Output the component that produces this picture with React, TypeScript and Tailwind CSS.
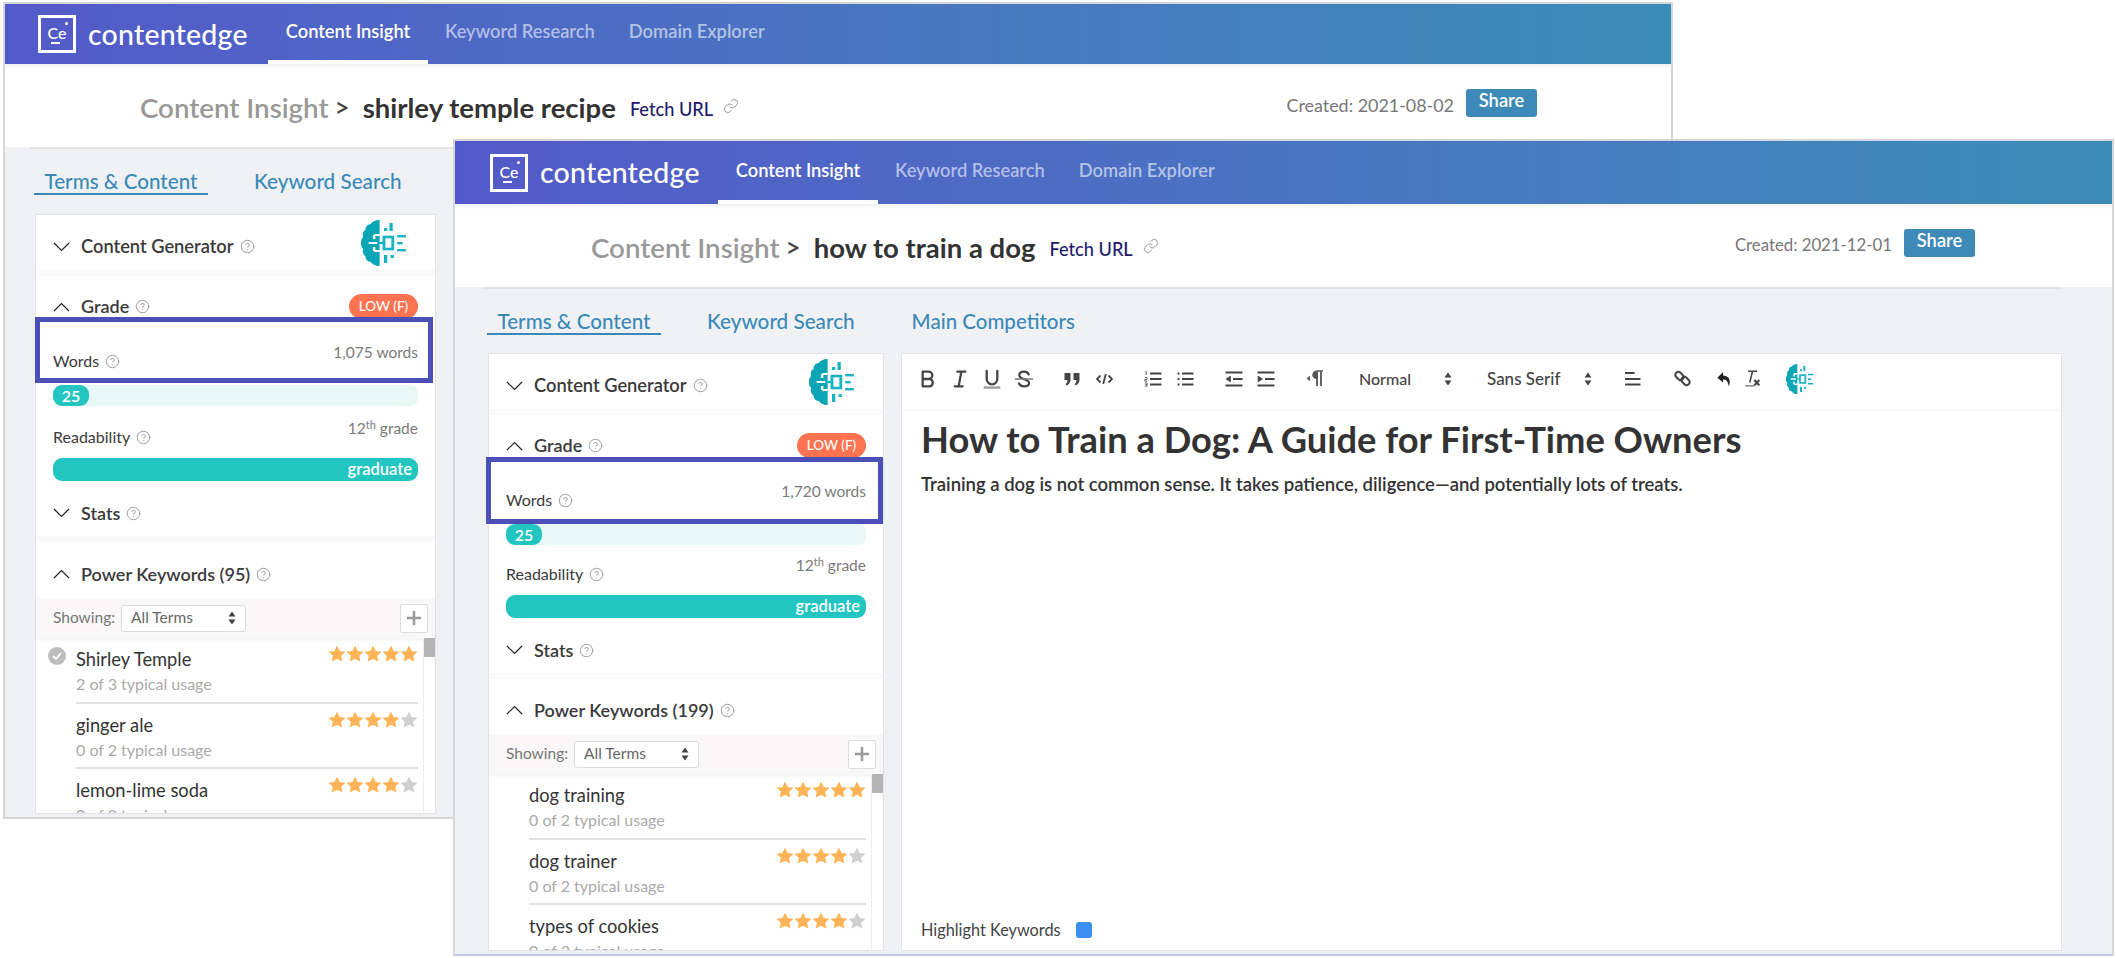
import { CircleHelp, Link as LinkIcon } from "lucide-react";

type Keyword = { name: string; usage: string; stars: number; checked?: boolean };

function Chevron({ up }: { up?: boolean }) {
	return (
		<svg width="17" height="10" viewBox="0 0 17 10" fill="none" stroke="#222" strokeWidth="1.2" className="shrink-0">
			<path d={up ? "M1 9L8.5 1.5L16 9" : "M1 1L8.5 8.5L16 1"} />
		</svg>
	);
}

function Help() {
	return <CircleHelp size={15} strokeWidth={1.5} className="ml-[6px] shrink-0 text-[#999]" />;
}

function Star({ on }: { on: boolean }) {
	return (
		<svg width="18" height="17" viewBox="0 0 18 17" className={on ? "fill-[#ffb457]" : "fill-[#cfcfcf]"}>
			<path d="M9 0.5L11.6 5.9L17.5 6.7L13.2 10.8L14.3 16.6L9 13.8L3.7 16.6L4.8 10.8L0.5 6.7L6.4 5.9Z" />
		</svg>
	);
}

function Brain({ className }: { className: string }) {
	return (
		<svg viewBox="0 0 42 46" preserveAspectRatio="none" className={className}>
			<path
				d="M17 0C13 0 10 2 9 4C6 4 4 7 4 10C2 11 1 14 2 17C0 19 0 21 0 23C0 25 0 27 2 29C1 32 2 35 4 36C4 39 6 42 9 42C10 44 13 46 17 46Z"
				fill="#0aa6b8"
			/>
			<path d="M7 23H15M12 15H17M12 31H17M12 15V19M12 27V31" fill="none" stroke="#fff" strokeWidth="2.2" />
			<path d="M15 23H21" fill="none" stroke="#18b4c4" strokeWidth="2.2" />
			<rect x="21" y="17" width="8" height="12" fill="none" stroke="#18b4c4" strokeWidth="2.6" />
			<rect x="21" y="8" width="3" height="3" fill="#18b4c4" />
			<rect x="26" y="3" width="3" height="8" fill="#18b4c4" />
			<rect x="33" y="15" width="8" height="2.4" fill="#18b4c4" />
			<rect x="33" y="22" width="5" height="2.4" fill="#18b4c4" />
			<rect x="33" y="29" width="8" height="2.4" fill="#18b4c4" />
			<rect x="21" y="35" width="3" height="8" fill="#18b4c4" />
			<rect x="27" y="35" width="3" height="3" fill="#18b4c4" />
		</svg>
	);
}

function QlIcon({ children }: { children: React.ReactNode }) {
	return (
		<svg width="24" height="24" viewBox="0 0 18 18" fill="none" stroke="#444" strokeWidth="1.7" strokeLinecap="round" strokeLinejoin="round">
			{children}
		</svg>
	);
}

function Btn({ children, className = "w-[32px]" }: { children: React.ReactNode; className?: string }) {
	return <div className={`flex shrink-0 items-center justify-center ${className}`}>{children}</div>;
}

function Arrows() {
	return (
		<svg width="8" height="14" viewBox="0 0 8 14" className="fill-[#444]">
			<path d="M4 0.5L7.5 5.5H0.5ZM4 13.5L0.5 8.5H7.5Z" />
		</svg>
	);
}

function Toolbar() {
	return (
		<div className="flex h-[55px] shrink-0 items-center pb-[6px] pl-[10px] shadow-[0_2px_3px_rgba(0,0,0,0.04)]">
			<Btn><QlIcon><path d="M5 3.500H9.500A2.700 2.700 0 0 1 9.500 9H5ZM5 9H10.300A2.800 2.800 0 0 1 10.300 14.500H5Z" /></QlIcon></Btn>
			<Btn><QlIcon><path d="M7 3.500H13M5 14.500H11M10 3.500L8 14.500" /></QlIcon></Btn>
			<Btn><QlIcon><path d="M5 3V9A4 4 0 0 0 13 9V3" /><path d="M3.500 15.500H14.500" stroke="#999" /></QlIcon></Btn>
			<Btn><QlIcon><path d="M12.500 5.500C12 4 10.700 3.500 9 3.500C7 3.500 5.500 4.500 5.500 6.200C5.500 9.500 12.800 8.800 12.800 12C12.800 13.700 11 14.500 9 14.500C7 14.500 5.700 13.800 5.200 12.300" /><path d="M2.500 9H15.500" stroke="#777" strokeWidth="1.200" /></QlIcon></Btn>
			<Btn className="ml-[16px] w-[32px]">
				<svg width="16" height="14" viewBox="0 0 16 14" className="fill-[#444]"><path d="M0.500 1H6.500V7.500C6.500 10.500 5 12.500 2.500 13.500L1.500 12C3 11 3.500 10 3.500 8H0.500ZM9.500 1H15.500V7.500C15.500 10.500 14 12.500 11.500 13.500L10.500 12C12 11 12.500 10 12.500 8H9.500Z" /></svg>
			</Btn>
			<Btn>
				<svg width="17" height="14" viewBox="0 0 17 14" fill="none" stroke="#444" strokeWidth="1.800"><path d="M4.500 3.500L1 7L4.500 10.500M12.500 3.500L16 7L12.500 10.500M9.800 2L7.200 12" /></svg>
			</Btn>
			<Btn className="ml-[17px] w-[32px]">
				<svg width="18" height="16" viewBox="0 0 18 16" fill="none" stroke="#444" strokeWidth="2"><path d="M6 2.500H17.500M6 8H17.500M6 13.500H17.500" /><path d="M1 1L2.300 0.600V4M0.800 6.500H3V8.500H0.800V10.200H3M0.800 12H3V15.200H0.800M1.200 13.600H3" strokeWidth="0.800" /></svg>
			</Btn>
			<Btn>
				<svg width="17" height="16" viewBox="0 0 17 16" fill="none" stroke="#444" strokeWidth="2"><path d="M5 2.500H16.500M5 8H16.500M5 13.500H16.500M0.500 2.500H2.500M0.500 8H2.500M0.500 13.500H2.500" /></svg>
			</Btn>
			<Btn className="ml-[17px] w-[32px]">
				<svg width="18" height="16" viewBox="0 0 18 16" fill="none" stroke="#444" strokeWidth="2"><path d="M0.500 1.500H17.500M0.500 14.500H17.500M8 8H17.500" /><path d="M1 8L5.500 5V11Z" fill="#444" strokeWidth="0.600" /></svg>
			</Btn>
			<Btn>
				<svg width="18" height="16" viewBox="0 0 18 16" fill="none" stroke="#444" strokeWidth="2"><path d="M0.500 1.500H17.500M0.500 14.500H17.500M8 8H17.500" /><path d="M1 5L5.500 8L1 11Z" fill="#444" strokeWidth="0.600" /></svg>
			</Btn>
			<Btn className="ml-[17px] w-[32px]">
				<svg width="18" height="17" viewBox="0 0 18 17" fill="none" stroke="#555" strokeWidth="1.800"><path d="M0.800 8.500L3.800 6V11Z" fill="#555" strokeWidth="0.400" /><path d="M11 1.500V16M15 1.500V16" /><path d="M17 1H10.500C8 1 6.800 3 6.800 5C6.800 7 8 8.500 11 8.500V1Z" fill="#555" strokeWidth="1" /></svg>
			</Btn>
			<div className="ml-[28px] flex w-[96px] shrink-0 items-center justify-between pr-[3px] text-[16px] font-medium text-[#444]">
				<span>Normal</span>
				<Arrows />
			</div>
			<div className="ml-[32px] flex w-[108px] shrink-0 items-center justify-between pr-[3px] text-[17px] font-medium text-[#444]">
				<span>Sans Serif</span>
				<Arrows />
			</div>
			<Btn className="ml-[21px] w-[32px]">
				<svg width="17" height="15" viewBox="0 0 17 15" fill="none" stroke="#444" strokeWidth="2.200"><path d="M1 2H10.500M1 8H16.500M1 13.500H16.500" /></svg>
			</Btn>
			<Btn className="ml-[20px] w-[28px]">
				<svg width="17" height="17" viewBox="0 0 17 17" fill="none" stroke="#444" strokeWidth="2">
					<rect x="1" y="3" width="9" height="6" rx="3" transform="rotate(45 5.500 6)" />
					<rect x="7" y="8" width="9" height="6" rx="3" transform="rotate(45 11.500 11)" />
				</svg>
			</Btn>
			<Btn className="ml-[14px] w-[28px]">
				<svg width="16" height="16" viewBox="0 0 16 18" className="fill-[#222]"><path d="M7 1L0.500 7.500L7 13V9.500C10.500 9.500 12.500 11.500 13.500 17.500C15.500 12 15 5.500 7 5Z" /></svg>
			</Btn>
			<Btn className="w-[28px]">
				<svg width="17" height="20" viewBox="0 0 18 22" fill="none" stroke="#444" strokeWidth="1.700"><path d="M4 2.500H14M9 2.500L6 15" /><path d="M1 18.500H11" stroke="#888" /><path d="M11 12L16.500 18M16.500 12L11 18" strokeWidth="2.400" /></svg>
			</Btn>
			<Brain className="ml-[20px] h-[30px] w-[28px] shrink-0" />
		</div>
	);
}

function Row({ label, value }: { label: string; value: React.ReactNode }) {
	return (
		<div className="mx-[17px] flex h-[29px] items-start justify-between">
			<div className="mt-[9px] flex items-center text-[16px] leading-[20px] text-[#3a3a3a]">
				{label}
				<Help />
			</div>
			<div className="text-[15.5px] leading-[20px] text-[#7a7a7a]">{value}</div>
		</div>
	);
}

function KeywordRow({ k }: { k: Keyword }) {
	return (
		<div className="relative ml-[40px] mr-[17px] h-[65.5px] border-b-2 border-[#e2e2e2] pt-[9px] last:border-0">
			{k.checked && (
				<div className="absolute -left-[28px] top-[9px] flex h-[18px] w-[18px] items-center justify-center rounded-full bg-[#bdbdbd]">
					<svg width="10" height="8" viewBox="0 0 10 8" fill="none" stroke="#fff" strokeWidth="1.800"><path d="M1 4L4 7L9 1" /></svg>
				</div>
			)}
			<div className="flex items-start justify-between">
				<span className="text-[18.3px] leading-[24px] text-[#333]">{k.name}</span>
				<div className="-mt-[2px] flex">
					{[0, 1, 2, 3, 4].map((n) => (
						<Star key={n} on={n < k.stars} />
					))}
				</div>
			</div>
			<div className="mt-[2px] text-[16px] leading-[22px] text-[#aaa]">{k.usage}</div>
		</div>
	);
}

function Sidebar({
	words,
	keywordsCount,
	keywords,
	boxClass,
	widthClass,
	readClass,
	powerClass,
}: {
	words: string;
	keywordsCount: number;
	keywords: Keyword[];
	boxClass: string;
	widthClass: string;
	readClass: string;
	powerClass: string;
}) {
	return (
		<div className={`relative flex h-full shrink-0 flex-col border border-[#e2e3e6] bg-white ${widthClass}`}>
			<div className="relative flex h-[55px] shrink-0 items-center pl-[17px] pt-[8px]">
				<Chevron />
				<span className="ml-[11px] text-[18.3px] font-semibold text-[#3a3a3a]">Content Generator</span>
				<Help />
				<Brain className="absolute right-[28px] top-[5px] h-[46px] w-[46px]" />
			</div>
			<div className="h-[6px] shrink-0 bg-[#fafafa]" />
			<div className="mt-[18px] flex h-[25px] shrink-0 items-center justify-between px-[17px]">
				<div className="flex items-center">
					<Chevron up />
					<span className="ml-[11px] text-[18px] font-semibold text-[#3a3a3a]">Grade</span>
					<Help />
				</div>
				<div className="flex h-[25px] w-[69px] items-center justify-center rounded-full bg-[#ff7350] text-[13.5px] font-medium text-white">LOW (F)</div>
			</div>
			<div className="mt-[23px] shrink-0">
				<Row label="Words" value={words} />
			</div>
			<div className="mx-[17px] mt-[14px] h-[21px] shrink-0 rounded-[8px] bg-[#e8f8f6]">
				<div className="flex h-full w-[36px] items-center justify-center rounded-[9px] bg-[#22c5c0] text-[16px] font-semibold text-white">25</div>
			</div>
			<div className={`shrink-0 ${readClass}`}>
				<Row label="Readability" value={<>12<sup className="text-[11px]">th</sup> grade</>} />
			</div>
			<div className="mx-[17px] mt-[11px] flex h-[23px] shrink-0 items-center justify-end rounded-[9px] bg-[#22c5c0] pr-[6px] text-[16.5px] font-semibold text-white">graduate</div>
			<div className="mt-[20px] flex h-[24px] shrink-0 items-center pl-[17px]">
				<Chevron />
				<span className="ml-[11px] text-[18px] font-semibold text-[#3a3a3a]">Stats</span>
				<Help />
			</div>
			<div className="mt-[11px] h-[6px] shrink-0 bg-[#fafafa]" />
			<div className={`flex h-[24px] shrink-0 items-center pl-[17px] ${powerClass}`}>
				<Chevron up />
				<span className="ml-[11px] text-[18px] font-semibold text-[#3a3a3a]">Power Keywords ({keywordsCount})</span>
				<Help />
			</div>
			<div className="mt-[12px] flex h-[40px] shrink-0 items-center bg-[#f9f7f8] pl-[17px] shadow-[0_2px_3px_rgba(0,0,0,0.05)]">
				<span className="text-[15.5px] text-[#777]">Showing:</span>
				<div className="ml-[6px] flex h-[27px] w-[125px] items-center justify-between rounded-[3px] border border-[#dcdcdc] bg-white px-[9px] text-[15.5px] text-[#666]">
					All Terms
					<Arrows />
				</div>
				<div className="ml-auto mr-[7px] flex h-[29px] w-[28px] items-center justify-center rounded-[2px] border border-[#ddd] bg-white">
					<svg width="14" height="14" viewBox="0 0 14 14" fill="none" stroke="#999" strokeWidth="2.500"><path d="M7 0V14M0 7H14" /></svg>
				</div>
			</div>
			<div className="relative min-h-0 flex-1 overflow-hidden">
				{keywords.map((k) => (
					<KeywordRow key={k.name} k={k} />
				))}
				<div className="absolute bottom-0 right-0 top-0 w-[12px] border-l border-[#eee] bg-white">
					<div className="h-[19px] bg-[#b5b5b5]" />
				</div>
			</div>
			<div className={`pointer-events-none absolute border-[5.5px] border-[#4b4fb8] ${boxClass}`} />
		</div>
	);
}

function Editor() {
	return (
		<div className="flex min-w-0 flex-1 flex-col border border-[#e2e3e6] bg-white">
			<Toolbar />
			<h1 className="ml-[19px] mt-[8px] text-[36.3px] font-bold leading-[44px] text-[#333]">How to Train a Dog: A Guide for First-Time Owners</h1>
			<p className="ml-[19px] mt-[11px] text-[18.5px] font-semibold leading-[24px] text-[#333]">Training a dog is not common sense. It takes patience, diligence—and potentially lots of treats.</p>
			<div className="ml-[19px] mt-auto mb-[8px] flex items-center text-[16.3px] text-[#444]">
				Highlight Keywords
				<span className="ml-[15px] h-[16px] w-[16px] rounded-[3px] bg-[#3b8ff0]" />
			</div>
		</div>
	);
}

function Win({
	className,
	headerClass,
	logoClass,
	titleClass,
	createdClass,
	lineClass,
	tabsClass,
	mainClass,
	title,
	created,
	front,
	children,
}: {
	className: string;
	headerClass: string;
	logoClass: string;
	titleClass: string;
	createdClass: string;
	lineClass: string;
	tabsClass: string;
	mainClass: string;
	title: string;
	created: string;
	front?: boolean;
	children: React.ReactNode;
}) {
	return (
		<div className={`absolute flex flex-col overflow-hidden border-2 bg-white ${className}`}>
			<div className={`relative flex shrink-0 items-stretch bg-gradient-to-r from-[#5359c9] to-[#3c8cb8] ${headerClass}`}>
				<div className={`flex items-center ${logoClass}`}>
					<div className="relative flex h-[38px] w-[38px] shrink-0 items-center justify-center border-[3px] border-white text-[16px] font-medium text-white">
						<span className="-mt-[2px]">Ce</span>
						<span className="absolute right-[5px] top-[4px] h-[3px] w-[3px] rounded-full bg-white" />
						<span className="absolute bottom-[6px] left-[10px] h-[2px] w-[9px] bg-white" />
					</div>
					<span className="ml-[12px] text-[28.5px] font-medium leading-none tracking-[0.2px] text-white">contentedge</span>
				</div>
				<div className="flex w-[160px] items-center justify-center border-b-4 border-white text-[18.3px] font-semibold text-white">Content Insight</div>
				<div className="flex items-center px-[17px] pb-[4px] text-[18.3px] font-semibold text-[#b3bee8]">Keyword Research</div>
				<div className="flex items-center px-[17px] pb-[4px] text-[18.3px] font-semibold text-[#b3c3e6]">Domain Explorer</div>
			</div>
			<div className={`flex h-[83px] shrink-0 items-center shadow-[inset_0_6px_6px_-6px_rgba(0,0,0,0.12)] ${titleClass}`}>
				<div className="mt-[5px] flex items-center">
					<span className="text-[27.7px] font-semibold text-[#999]">Content Insight</span>
					<span className="ml-[6px] text-[26px] font-medium text-[#444]">&gt;</span>
					<span className="ml-[13px] text-[27.5px] font-bold text-[#333]">{title}</span>
					<span className="ml-[14px] mt-[3px] text-[18.2px] font-medium text-[#1e1b6e]">Fetch URL</span>
					<LinkIcon size={16} strokeWidth={1} className="ml-[10px] -mt-[4px] text-[#666]" />
				</div>
				<span className={`ml-auto -mt-[1px] text-[#777] ${createdClass}`}>Created: {created}</span>
				<div className="ml-[12px] -mt-[5px] flex h-[28px] w-[71px] items-center justify-center rounded-[3px] bg-[#3d8ab8] pb-[4px] text-[18.3px] font-semibold text-white">Share</div>
			</div>
			<div className="flex min-h-0 flex-1 flex-col bg-[#f0f1f5] pb-[3px]">
				<div className={`h-[2px] shrink-0 bg-[#e2e3e6] ${lineClass}`} />
				<div className={`flex shrink-0 items-start ${tabsClass}`}>
					<div className="flex h-[26px] w-[174px] items-center justify-center border-b-2 border-[#3a8ab8] text-[20.6px] font-medium text-[#3a8ab8]">Terms &amp; Content</div>
					<div className="ml-[46px] h-[26px] text-[20.7px] font-medium leading-[24px] text-[#3a8ab8]">Keyword Search</div>
					{front && <div className="ml-[57px] h-[26px] text-[20.5px] font-medium leading-[24px] text-[#3a8ab8]">Main Competitors</div>}
				</div>
				<div className={`flex min-h-0 flex-1 gap-[17px] ${mainClass}`}>{children}</div>
			</div>
		</div>
	);
}

const backKeywords: Keyword[] = [
	{ name: "Shirley Temple", usage: "2 of 3 typical usage", stars: 5, checked: true },
	{ name: "ginger ale", usage: "0 of 2 typical usage", stars: 4 },
	{ name: "lemon-lime soda", usage: "0 of 2 typical usage", stars: 4 },
];

const frontKeywords: Keyword[] = [
	{ name: "dog training", usage: "0 of 2 typical usage", stars: 5 },
	{ name: "dog trainer", usage: "0 of 2 typical usage", stars: 4 },
	{ name: "types of cookies", usage: "0 of 2 typical usage", stars: 4 },
];

export default function App() {
	return (
		<div className="relative h-[958px] w-[2116px] overflow-hidden bg-white font-['Lato',sans-serif]">
			<Win
				className="left-[3px] top-[2px] h-[817px] w-[1670px] border-[#d5d6da]"
				headerClass="h-[60px]"
				logoClass="w-[263px] pl-[33px]"
				titleClass="pl-[135px] pr-[134px]"
				createdClass="text-[17.9px]"
				lineClass="ml-[24px] mr-[48px]"
				tabsClass="ml-[29px] mb-[19px] mt-[20px]"
				mainClass="ml-[30px]"
				title="shirley temple recipe"
				created="2021-08-02"
			>
				<Sidebar
					words="1,075 words"
					keywordsCount={95}
					keywords={backKeywords}
					widthClass="w-[401px]"
					readClass="mt-[12px]"
					powerClass="mt-[20px]"
					boxClass="-left-px top-[102px] h-[66px] w-[398px]"
				/>
			</Win>
			<Win
				className="left-[453px] top-[139px] h-[817px] w-[1661px] border-[#d5d6da] border-b-[#c3c8e6]"
				headerClass="h-[63px]"
				logoClass="w-[263px] pl-[35px]"
				titleClass="pl-[136px] pr-[137px]"
				createdClass="text-[16.8px]"
				lineClass="ml-[27px] mr-[50px]"
				tabsClass="ml-[32px] mb-[18px] mt-[20px]"
				mainClass="ml-[33px] mr-[50px]"
				title="how to train a dog"
				created="2021-12-01"
				front
			>
				<Sidebar
					words="1,720 words"
					keywordsCount={199}
					keywords={frontKeywords}
					widthClass="w-[396px]"
					readClass="mt-[10px]"
					powerClass="mt-[19px]"
					boxClass="-left-[3px] top-[103px] h-[67px] w-[397px]"
				/>
				<Editor />
			</Win>
		</div>
	);
}
